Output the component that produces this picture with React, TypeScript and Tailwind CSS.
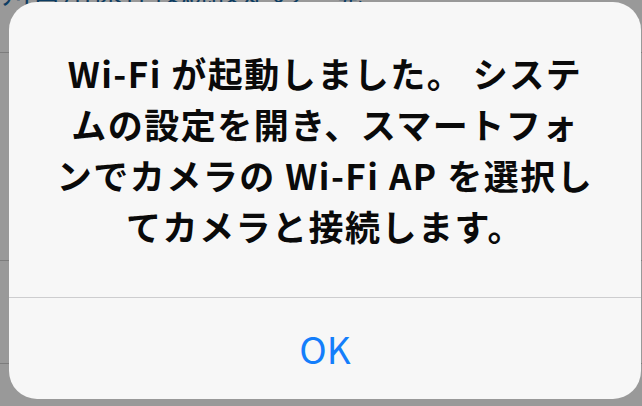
import React from "react"

const font = { fontFamily: '"Noto Sans CJK JP", "Noto Sans", sans-serif' }

function Backdrop() {
	return (
		<div className="flex flex-col">
			<div className="h-[53px] border-b border-[#7c7c7c] overflow-hidden">
				<div className="-mt-[26px] pl-[2px] text-[30px] leading-[34px] text-[#0d3d63] whitespace-nowrap">
					川日用保存接続設定の一覧
				</div>
			</div>
			<div className="h-[208px] border-b border-[#7c7c7c]" />
			<div className="h-[103px] border-b border-[#7c7c7c]" />
		</div>
	)
}

function Alert() {
	return (
		<div
			className="absolute left-[9px] top-[2px] flex h-[397px] w-[632px] flex-col rounded-[28px] bg-[#f7f7f7]"
			style={font}
		>
			<div className="h-[295px] px-[10px] pt-[45px] text-center text-[35px] font-semibold leading-[51px] tracking-[1.5px] text-[#0a0a0a]">
				Wi-Fi が起動しました。 システ
				<br />
				ムの設定を開き、スマートフォ
				<br />
				ンでカメラの Wi-Fi AP を選択し
				<br />
				てカメラと接続します。
			</div>
			<div className="h-px bg-[#cdcdcf]" />
			<button
				type="button"
				className="flex flex-1 items-center justify-center text-[37px] text-[#147efb]"
			>
				OK
			</button>
		</div>
	)
}

export default function App() {
	return (
		<div className="relative h-[406px] w-[642px] overflow-hidden bg-[#999999]">
			<Backdrop />
			<Alert />
		</div>
	)
}
